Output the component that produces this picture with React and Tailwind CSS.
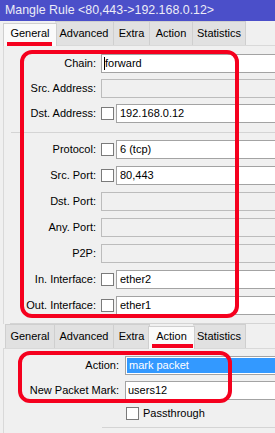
import React from 'react';

const tabs = [
  { name: 'General', w: 'w-[50px]', ws: 'w-[54px]' },
  { name: 'Advanced', w: 'w-[59px]', ws: 'w-[63px]' },
  { name: 'Extra', w: 'w-[36px]', ws: 'w-[40px]' },
  { name: 'Action', w: 'w-[43px]', ws: 'w-[47px]' },
  { name: 'Statistics', w: 'w-[53px]', ws: 'w-[57px]' },
];

function TabRow({ active, height, tall }) {
  return (
    <div className={`flex items-end pl-[5px] ${height}`}>
      {tabs.map((t) =>
        t.name === active ? (
          <div
            key={t.name}
            className={`relative z-10 -mx-[2px] -mb-px flex ${t.ws} ${tall} items-start justify-center border border-b-0 border-[#cfcfcf] bg-[#fafafa] pt-[4px]`}
          >
            {t.name}
          </div>
        ) : (
          <div
            key={t.name}
            className={`flex ${t.w} h-full items-center justify-center border border-b-0 border-l-0 first:border-l border-[#cfcfcf] bg-[#e1e1e1]`}
          >
            {t.name}
          </div>
        )
      )}
    </div>
  );
}

function Checkbox() {
  return <div className="h-[13px] w-[13px] shrink-0 border border-[#7a7a7a] bg-white" />;
}

function Input({ value, disabled, caret }) {
  return (
    <div
      className={`relative flex h-full flex-1 items-center border pl-[3px] ${
        disabled ? 'border-[#bcbcbc] bg-[#f0f0f0]' : 'border-[#a3a3a3] bg-white'
      }`}
    >
      {caret && <span className="absolute left-[2px] top-[2px] h-[13px] w-px bg-black" />}
      {value}
    </div>
  );
}

function Row({ label, value, check, disabled, caret, className = '' }) {
  return (
    <div className={`flex h-[19px] items-center ${className}`}>
      <div className="w-[92px] shrink-0 text-right">{label}</div>
      <div className="-mr-[20px] ml-[5px] flex h-full flex-1 items-center">
        {check && (
          <div className="mr-[2px]">
            <Checkbox />
          </div>
        )}
        <Input value={value} disabled={disabled} caret={caret} />
      </div>
    </div>
  );
}

export default function App() {
  return (
    <div className="relative h-[433px] w-[275px] overflow-hidden bg-[#f0f0f0] font-['Liberation_Sans',Arial,sans-serif] text-[11px] leading-none text-black">
      {/* title bar */}
      <div className="flex h-[21px] items-center bg-[#4b4fc9] pl-[5px] text-[12.4px] text-[#ececf7]">
        Mangle Rule &lt;80,443-&gt;192.168.0.12&gt;
      </div>

      <TabRow active="General" height="h-[24px] pb-0" tall="h-[23px]" />

      {/* general panel */}
      <div className="ml-[3px] border-l border-t border-[#d9d9d9] pt-[8px]">
        <div className="flex flex-col gap-[6px]">
          <Row label="Chain:" value="forward" caret />
          <Row label="Src. Address:" value="" disabled />
          <Row label="Dst. Address:" value="192.168.0.12" check />
        </div>
        <div className="ml-[7px] mt-[9px] h-px bg-[#d4d4d4]" />
        <div className="mt-[7px] flex flex-col gap-[7px]">
          <Row label="Protocol:" value="6 (tcp)" check />
          <Row label="Src. Port:" value="80,443" check />
          <Row label="Dst. Port:" value="" disabled />
          <Row label="Any. Port:" value="" disabled />
          <Row label="P2P:" value="" disabled />
          <Row label="In. Interface:" value="ether2" check />
          <Row label="Out. Interface:" value="ether1" check />
        </div>
        <div className="ml-[6px] mt-[8px] h-px bg-[#d4d4d4]" />
      </div>

      <TabRow active="Action" height="h-[24px]" tall="h-[23px]" />

      {/* action panel */}
      <div className="ml-[3px] h-[90px] border-l border-t border-[#d9d9d9] pt-[7px]">
        <div className="flex flex-col gap-[6px]">
          <div className="flex h-[19px] items-center">
            <div className="w-[115px] shrink-0 text-right">Action:</div>
            <div className="-mr-[20px] ml-[6px] flex h-full flex-1 border border-[#a3a3a3] bg-white p-px">
              <div className="flex flex-1 items-center bg-[#3399ff] pl-[2px] text-white">mark packet</div>
            </div>
          </div>
          <div className="flex h-[19px] items-center">
            <div className="w-[115px] shrink-0 text-right">New Packet Mark:</div>
            <div className="-mr-[20px] ml-[6px] flex h-full flex-1 items-center border border-[#a3a3a3] bg-white pl-[2px]">
              users12
            </div>
          </div>
        </div>
        <div className="mt-[4px] flex h-[19px] items-center pl-[122px]">
          <Checkbox />
          <span className="ml-[4px]">Passthrough</span>
        </div>
        <div className="ml-[98px] mt-[4px] h-px bg-[#d4d4d4]" />
      </div>

      {/* red annotations */}
      <div className="absolute left-[7px] top-[42px] z-20 h-[4px] w-[45px] bg-[#f5001e]" />
      <div className="absolute left-[152px] top-[344px] z-20 h-[4px] w-[41px] bg-[#f5001e]" />
      <div className="absolute left-[20px] top-[50px] z-20 h-[268px] w-[219px] rounded-[12px] border-4 border-[#f5001e]" />
      <div className="absolute left-[18px] top-[351px] z-20 h-[52px] w-[214px] rounded-[12px] border-4 border-[#f5001e]" />
    </div>
  );
}
